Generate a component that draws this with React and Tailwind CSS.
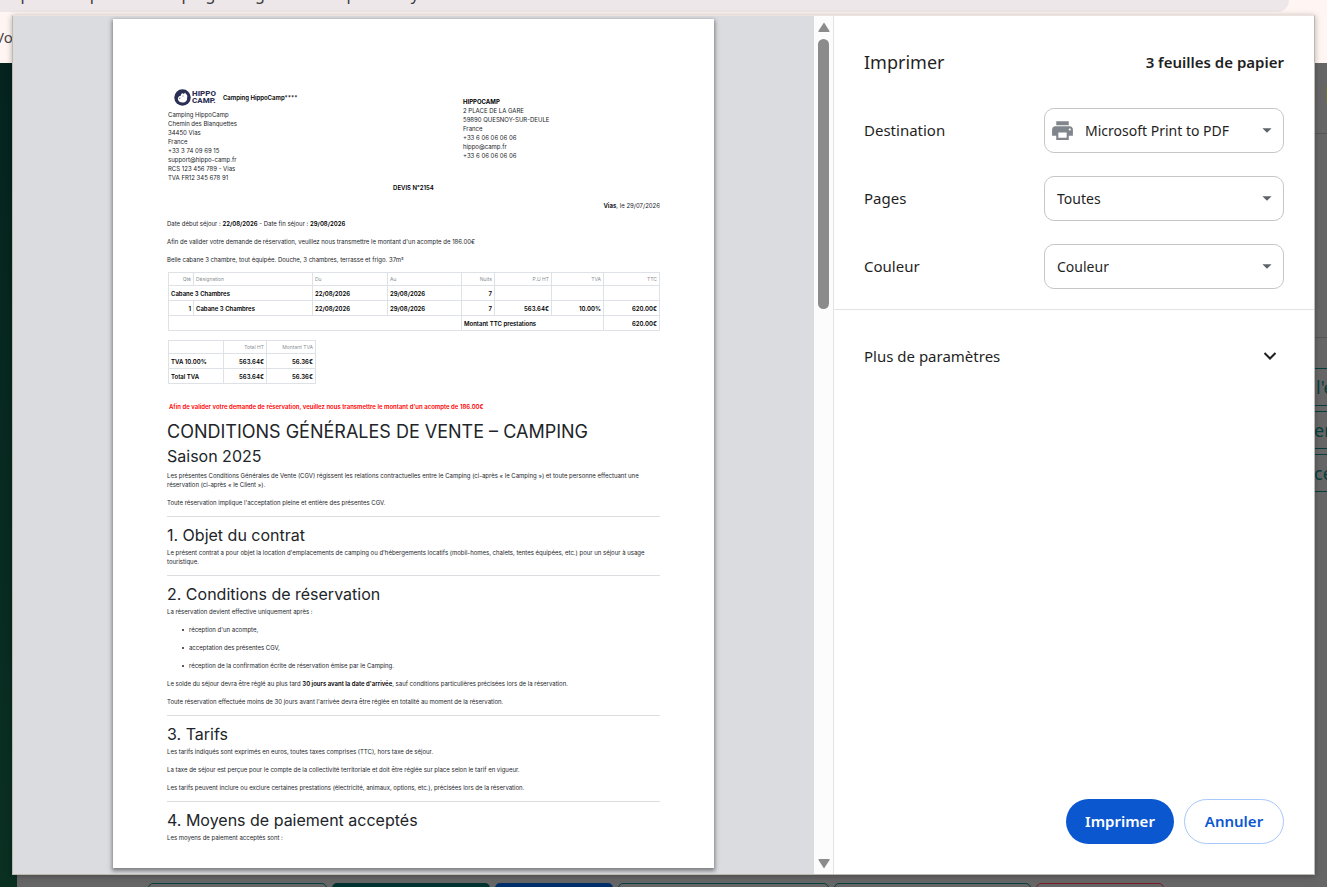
import { useState } from 'react';
import { MdPrint, MdArrowDropDown } from 'react-icons/md';

const sellerLines = [
  'Camping HippoCamp',
  'Chemin des Blanquettes',
  '34450 Vias',
  'France',
  '+33 3 74 09 69 15',
  'support@hippo-camp.fr',
  'RCS 123 456 789 - Vias',
  'TVA FR12 345 678 91'
];

const clientLines = [
  '2 PLACE DE LA GARE',
  '59890 QUESNOY-SUR-DEULE',
  'France',
  '+33 6 06 06 06 06',
  'hippo@camp.fr',
  '+33 6 06 06 06 06'
];

const HippoLogo = () => (
  <div className="flex items-center gap-px text-[#2b2f55]">
    <svg viewBox="0 0 34 34" className="size-[17px]" aria-hidden="true">
      <circle cx="17" cy="17" r="16.5" fill="currentColor" />
      <path
        d="M8 21c-1-5 3-7 6-8 0-3 2-5 4-4l2 1 2-3 2 3c3 2 3 5 2 8 1 5-3 9-9 9-5 0-8-2-9-6z"
        fill="#fff"
      />
      <circle cx="18" cy="14" r="1" fill="currentColor" />
      <path d="M10 19l3-1" stroke="currentColor" strokeWidth="1.5" />
    </svg>
    <div className="font-[Roboto,sans-serif] text-[8px] leading-[7px] font-extrabold">
      <div>HIPPO</div>
      <div>CAMP.</div>
    </div>
  </div>
);

const Section = ({ title, children }) => (
  <section className="mt-[9px] border-t border-[#dcdde0] pt-[6px]">
    <h2 className="mb-px text-[16px] leading-6">{title}</h2>
    <div className="flex flex-col gap-[9px]">{children}</div>
  </section>
);

const Bullet = ({ children }) => (
  <li className="flex items-center gap-[5px] before:size-[2px] before:rounded-full before:bg-[#212529]">{children}</li>
);

const InvoiceTable = () => (
  <table className="w-full table-fixed border-collapse font-semibold text-black [&_td]:border [&_td]:border-[#dee2e6] [&_td]:px-[2px] [&_th]:border [&_th]:border-[#dee2e6] [&_th]:px-[2px]">
    <colgroup>
      <col className="w-[25px]" />
      <col className="w-[119px]" />
      <col className="w-[75px]" />
      <col className="w-[74px]" />
      <col className="w-[33px]" />
      <col className="w-[57px]" />
      <col className="w-[52px]" />
      <col />
    </colgroup>
    <thead>
      <tr className="h-[13px] text-right text-[5px] text-[#8b8f94] [&_th]:font-normal">
        <th>Qté</th>
        <th className="text-left">Désignation</th>
        <th className="text-left">Du</th>
        <th className="text-left">Au</th>
        <th>Nuits</th>
        <th>P.U HT</th>
        <th>TVA</th>
        <th>TTC</th>
      </tr>
    </thead>
    <tbody>
      <tr className="h-[15px]">
        <td colSpan={2}>Cabane 3 Chambres</td>
        <td>22/08/2026</td>
        <td>29/08/2026</td>
        <td className="text-right">7</td>
        <td></td>
        <td></td>
        <td></td>
      </tr>
      <tr className="h-[15px]">
        <td className="text-right">1</td>
        <td>Cabane 3 Chambres</td>
        <td>22/08/2026</td>
        <td>29/08/2026</td>
        <td className="text-right">7</td>
        <td className="text-right">563.64€</td>
        <td className="text-right">10.00%</td>
        <td className="text-right">620.00€</td>
      </tr>
      <tr className="h-[15px]">
        <td colSpan={4}></td>
        <td colSpan={3}>Montant TTC prestations</td>
        <td className="text-right">620.00€</td>
      </tr>
    </tbody>
  </table>
);

const TaxTable = () => (
  <table className="w-[148px] table-fixed border-collapse font-semibold text-black [&_td]:border [&_td]:border-[#dee2e6] [&_td]:px-[2px] [&_th]:border [&_th]:border-[#dee2e6] [&_th]:px-[2px]">
    <colgroup>
      <col className="w-[55px]" />
      <col className="w-[43px]" />
      <col />
    </colgroup>
    <thead>
      <tr className="h-[13px] text-right text-[5px] text-[#8b8f94] [&_th]:font-normal">
        <th></th>
        <th>Total HT</th>
        <th>Montant TVA</th>
      </tr>
    </thead>
    <tbody className="text-right">
      <tr className="h-[15px]">
        <td className="text-left">TVA 10.00%</td>
        <td>563.64€</td>
        <td>56.36€</td>
      </tr>
      <tr className="h-[15px]">
        <td className="text-left">Total TVA</td>
        <td>563.64€</td>
        <td>56.36€</td>
      </tr>
    </tbody>
  </table>
);

const PreviewPage = () => (
  <article className="w-[601px] overflow-hidden bg-white px-[54px] pt-[69px] font-[Inter,sans-serif] text-[6px] leading-[9px] text-[#212529] shadow-[0_2px_4px_1px_rgba(60,64,67,0.6)]">
    <header className="grid grid-cols-[295px_1fr] pl-px">
      <div>
        <div className="mb-[4px] flex h-[18px] items-center gap-[7px] pl-[6px]">
          <HippoLogo />
          <strong className="font-semibold text-black">Camping HippoCamp****</strong>
        </div>
        {sellerLines.map((line) => (
          <div key={line}>{line}</div>
        ))}
      </div>
      <div className="pt-[9px]">
        <div className="font-bold text-black">HIPPOCAMP</div>
        {clientLines.map((line, i) => (
          <div key={i}>{line}</div>
        ))}
      </div>
    </header>

    <div className="mt-px text-center font-semibold text-black">DEVIS N°2154</div>
    <div className="mt-[9px] text-right">
      <b>Vias</b>, le 29/07/2026
    </div>

    <div className="mt-[9px] flex flex-col gap-[9px]">
      <p>
        Date début séjour : <b className="font-semibold text-black">22/08/2026</b> - Date fin séjour :{' '}
        <b className="font-semibold text-black">29/08/2026</b>
      </p>
      <p>Afin de valider votre demande de réservation, veuillez nous transmettre le montant d'un acompte de 186.00€</p>
      <p>Belle cabane 3 chambre, tout équipée. Douche, 3 chambres, terrasse et frigo. 37m²</p>
    </div>

    <div className="mt-[8px] flex flex-col gap-[9px] pl-px">
      <InvoiceTable />
      <TaxTable />
    </div>

    <p className="mt-[18px] pl-[2px] font-semibold text-[#ff0000]">
      Afin de valider votre demande de réservation, veuillez nous transmettre le montant d'un acompte de 186.00€
    </p>

    <h1 className="mt-[8px] text-[18px] leading-[25px]">CONDITIONS GÉNÉRALES DE VENTE – CAMPING</h1>
    <h2 className="mb-[3px] text-[16px] leading-6">Saison 2025</h2>
    <div className="flex flex-col gap-[9px]">
      <p>
        Les présentes Conditions Générales de Vente (CGV) régissent les relations contractuelles entre le Camping
        (ci-après « le Camping ») et toute personne effectuant une réservation (ci-après « le Client »).
      </p>
      <p>Toute réservation implique l'acceptation pleine et entière des présentes CGV.</p>
    </div>

    <Section title="1. Objet du contrat">
      <p>
        Le présent contrat a pour objet la location d'emplacements de camping ou d'hébergements locatifs (mobil-homes,
        chalets, tentes équipées, etc.) pour un séjour à usage touristique.
      </p>
    </Section>

    <Section title="2. Conditions de réservation">
      <p>La réservation devient effective uniquement après :</p>
      <ul className="flex flex-col gap-[9px] pl-[15px]">
        <Bullet>réception d'un acompte,</Bullet>
        <Bullet>acceptation des présentes CGV,</Bullet>
        <Bullet>réception de la confirmation écrite de réservation émise par le Camping.</Bullet>
      </ul>
      <p>
        Le solde du séjour devra être réglé au plus tard{' '}
        <b className="font-semibold text-black">30 jours avant la date d'arrivée</b>, sauf conditions particulières
        précisées lors de la réservation.
      </p>
      <p>Toute réservation effectuée moins de 30 jours avant l'arrivée devra être réglée en totalité au moment de la réservation.</p>
    </Section>

    <Section title="3. Tarifs">
      <p>Les tarifs indiqués sont exprimés en euros, toutes taxes comprises (TTC), hors taxe de séjour.</p>
      <p>La taxe de séjour est perçue pour le compte de la collectivité territoriale et doit être réglée sur place selon le tarif en vigueur.</p>
      <p>Les tarifs peuvent inclure ou exclure certaines prestations (électricité, animaux, options, etc.), précisées lors de la réservation.</p>
    </Section>

    <Section title="4. Moyens de paiement acceptés">
      <p>Les moyens de paiement acceptés sont :</p>
    </Section>
  </article>
);

const SelectRow = ({ id, label, value, options, onChange, icon }) => (
  <div className="flex items-center justify-between">
    <label htmlFor={id}>{label}</label>
    <div className="relative w-[240px]">
      {icon && <MdPrint className="absolute top-[10px] left-[6px] size-[25px] text-[#80868b]" />}
      <select
        id={id}
        value={value}
        onChange={(e) => onChange(e.target.value)}
        className={`h-[45px] w-full appearance-none rounded-[10px] border border-[#c4c7c5] bg-white pr-8 text-[14px] ${
          icon ? 'pl-[40px]' : 'pl-[12px]'
        }`}
      >
        {options.map((option) => (
          <option key={option}>{option}</option>
        ))}
      </select>
      <MdArrowDropDown className="pointer-events-none absolute top-[11px] right-[6px] size-[22px] text-[#5f6368]" />
    </div>
  </div>
);

const PrintSettings = () => {
  const [destination, setDestination] = useState('Microsoft Print to PDF');
  const [pages, setPages] = useState('Toutes');
  const [color, setColor] = useState('Couleur');

  return (
    <aside className="flex w-[481px] shrink-0 flex-col border-l border-[#e3e3e6] bg-white text-[15px] text-[#1f1f1f]">
      <div className="flex h-[92px] items-center justify-between px-[30px]">
        <h1 className="text-[18px]">Imprimer</h1>
        <span className="font-semibold">3 feuilles de papier</span>
      </div>
      <div className="flex flex-col gap-[23px] border-b border-[#e3e3e6] px-[30px] pb-[20px]">
        <SelectRow
          id="destination"
          label="Destination"
          value={destination}
          options={['Microsoft Print to PDF', 'Enregistrer au format PDF']}
          onChange={setDestination}
          icon
        />
        <SelectRow id="pages" label="Pages" value={pages} options={['Toutes', 'Personnalisé']} onChange={setPages} />
        <SelectRow id="color" label="Couleur" value={color} options={['Couleur', 'Noir et blanc']} onChange={setColor} />
      </div>
      <button className="mt-[22px] flex h-12 items-center justify-between pr-[37px] pl-[30px]">
        Plus de paramètres
        <svg viewBox="0 0 14 14" className="size-[14px]" fill="none" stroke="currentColor" strokeWidth="2" aria-hidden="true">
          <path d="M1.500 4l5.500 5.500L12.500 4" />
        </svg>
      </button>
      <div className="mt-auto flex justify-end gap-[10px] px-[30px] pb-[30px] font-semibold">
        <button className="h-[45px] w-[108px] rounded-full bg-[#0b57d0] text-white">Imprimer</button>
        <button className="h-[45px] w-[100px] rounded-full border border-[#a8c7fa] text-[#0b57d0]">Annuler</button>
      </div>
    </aside>
  );
};

// Dimmed application behind the dialog
const AppBackground = () => (
  <div className="flex h-full flex-col bg-[#fff5f2]">
    <div className="mr-[38px] h-3 shrink-0 overflow-hidden rounded-br-[18px] bg-[#ede7e9] pl-[14px]">
      <div className="-mt-4 text-[16px] leading-5 text-[#3a3a3f]">
        rp/clients-prive.fr/camping/edit-gestion/#impressiony
      </div>
    </div>
    <div className="flex h-[51px] shrink-0 items-center overflow-hidden text-[15px] text-[#4a4548]">
      <span className="-ml-[5px]">Vo</span>
    </div>
    <div className="flex min-h-0 flex-1">
      <nav className="w-[17px] shrink-0 bg-linear-to-b from-[#05231f] to-[#0a3022]" />
      <main className="flex min-w-0 flex-1 flex-col bg-[#666666]">
        <div className="flex w-[13px] flex-1 flex-col self-end overflow-hidden text-[18px] whitespace-nowrap text-[#063f3d]">
          <div className="h-[71px] shrink-0 border-b border-[#565656] pt-6">
            <div className="ml-auto h-4 w-px bg-[#6b7330]" />
          </div>
          <div className="h-[204px] shrink-0 border-b border-[#565656]" />
          <div className="mt-[30px] flex flex-col gap-[5px]">
            <button className="h-[38px] border-y border-[#063f3d] pl-[2px] text-left">l'effectif</button>
            <button className="h-[38px] border-y border-[#063f3d] text-left">er</button>
            <button className="h-[38px] border-y border-[#063f3d] text-left">ce</button>
          </div>
        </div>
        <div className="ml-[131px] flex h-[4px] gap-[5px] overflow-hidden">
          <button aria-label="Retour" className="h-10 w-[179px] shrink-0 rounded-[5px] border border-[#063f3d]" />
          <button aria-label="Enregistrer" className="h-10 w-[158px] shrink-0 rounded-[5px] bg-[#003330]" />
          <button aria-label="Imprimer le devis" className="h-10 w-[118px] shrink-0 rounded-[5px] bg-[#00306b]" />
          <button aria-label="Envoyer" className="h-10 w-[211px] shrink-0 rounded-[5px] border border-[#063f3d]" />
          <button aria-label="Dupliquer" className="h-10 w-[197px] shrink-0 rounded-[5px] border border-[#063f3d]" />
          <button aria-label="Supprimer" className="h-10 w-[128px] shrink-0 rounded-[5px] border border-[#7a1d2a]" />
        </div>
      </main>
    </div>
  </div>
);

export default function App() {
  return (
    <div className="relative h-screen overflow-hidden font-['Noto_Sans',sans-serif]">
      <AppBackground />
      <div
        role="dialog"
        aria-label="Imprimer"
        className="absolute inset-x-3 top-[15px] bottom-3 flex border border-[#bdb8b0] border-t-[#ece3de] bg-white shadow-[0_1px_6px_rgba(0,0,0,0.3)]"
      >
        <div className="flex min-w-0 flex-1 justify-center overflow-hidden bg-[#dadce0] pt-[3px] pb-[6px]">
          <PreviewPage />
        </div>
        <div className="flex w-[19px] shrink-0 flex-col items-center bg-[#fcfcfc] pt-[6px] pb-[5px] text-[#8b8b8b]">
          <svg viewBox="0 0 12 10" className="h-[10px] w-3" aria-hidden="true">
            <path d="M6 0.500L11.500 9a.8.8 0 0 1-.6 1H1a.8.8 0 0 1-.6-1z" fill="currentColor" />
          </svg>
          <div className="mt-[7px] h-[270px] w-[11px] rounded-full bg-[#8b8b8b]" />
          <svg viewBox="0 0 12 10" className="mt-auto h-[10px] w-3 rotate-180" aria-hidden="true">
            <path d="M6 0.500L11.500 9a.8.8 0 0 1-.6 1H1a.8.8 0 0 1-.6-1z" fill="currentColor" />
          </svg>
        </div>
        <PrintSettings />
      </div>
    </div>
  );
}
